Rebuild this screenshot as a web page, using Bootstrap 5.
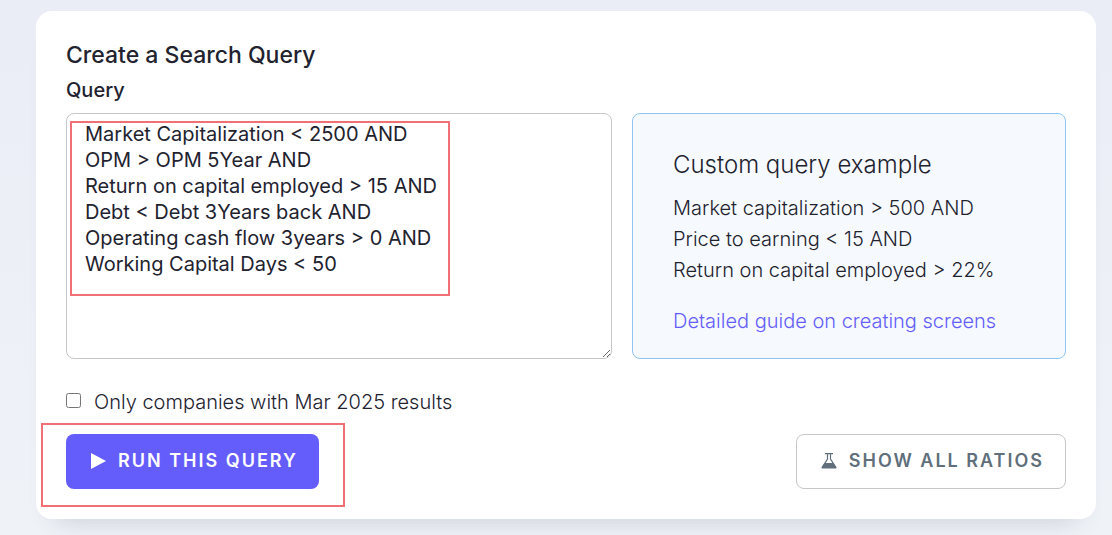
<!DOCTYPE html>
<html lang="en">
<head>
<meta charset="utf-8">
<meta name="viewport" content="width=device-width, initial-scale=1">
<title>Create a Search Query</title>
<link href="https://cdn.jsdelivr.net/npm/bootstrap@5.3.0/dist/css/bootstrap.min.css" rel="stylesheet">
<style>
  body {
    font-family: Inter, "Liberation Sans", sans-serif;
    font-size: 20px; line-height: 31px; font-weight: 300;
    color: #22222f;
    background: linear-gradient(#eaedf6, #eff2f7);
    min-height: 100vh;
    padding: 11px 16px 16px 36px;
  }
  .query-card { border: 0; border-radius: 16px; padding: 28px 30px 30px; box-shadow: 0 20px 24px -20px rgba(60, 80, 100, .24); }
  .query-title { font-size: 23px; line-height: 32px; font-weight: 500; }
  .query-label { font-size: 20px; line-height: 30px; font-weight: 500; }
  .query-grid { display: grid; grid-template-columns: 39fr 31fr; gap: 20px; }
  .query-text {
    font-size: 20px; line-height: 26px; font-weight: 400;
    height: 246px; padding: 7px 18px; border: 1px solid #c6c6cb; border-radius: 8px; resize: both;
  }
  .query-text, .query-text:focus { color: #22222f; background: #fff; }
  .example { background: #f6fafe; border: 1px solid #90c4f4; border-radius: 8px; padding: 34px 40px 20px; }
  .example-title { font-size: 24px; line-height: 34px; font-weight: 300; margin-bottom: 11px; }
  .example a { color: #655dfb; text-decoration: none; }
  .results-check { width: 15px; height: 15px; margin: 0 13px 5px 0; }
  .action { height: 55px; padding: 0 21px 2px 24px; border-radius: 8px; font-size: 18px; line-height: 24px; font-weight: 600; letter-spacing: 2px; gap: 12px; }
  .action-run, .action-run:hover { color: #fff; background: #655dfb; border: 0; }
  .action-ratios, .action-ratios:hover { color: #606f7b; background: #fff; border: 1px solid #c6c6cb; }
  .mark-box { position: absolute; border: 2px solid #f07076; pointer-events: none; }
  .mark-query { left: 4px; top: 8px; width: 380px; height: 175px; }
  .mark-run { inset: -11px -26px -18px -25px; }
</style>
</head>
<body>
<main class="card query-card">
  <h1 class="query-title mb-1">Create a Search Query</h1>
  <label for="query" class="query-label mb-2">Query</label>
  <div class="query-grid">
    <div class="position-relative">
      <textarea id="query" class="form-control query-text" spellcheck="false">Market Capitalization &lt; 2500 AND
OPM &gt; OPM 5Year AND
Return on capital employed &gt; 15 AND
Debt &lt; Debt 3Years back AND
Operating cash flow 3years &gt; 0 AND
Working Capital Days &lt; 50</textarea>
      <div class="mark-box mark-query"></div>
    </div>
    <section class="example">
      <h2 class="example-title">Custom query example</h2>
      <p class="mb-0">Market capitalization &gt; 500 AND<br>Price to earning &lt; 15 AND<br>Return on capital employed &gt; 22%</p>
      <p class="mb-0 mt-3 pt-1"><a href="#guide">Detailed guide on creating screens</a></p>
    </section>
  </div>
  <div class="d-flex align-items-center mt-4 pt-1 mb-3">
    <input type="checkbox" id="results" class="results-check">
    <label for="results">Only companies with Mar 2025 results</label>
  </div>
  <div class="d-flex flex-wrap justify-content-between gap-3">
    <div class="position-relative">
      <button type="button" class="btn action action-run d-flex align-items-center">
        <svg width="16" height="16" viewBox="0 0 16 16" fill="currentColor" aria-hidden="true"><path d="M1 0v16l15-8z"/></svg>
        RUN THIS QUERY
      </button>
      <div class="mark-box mark-run"></div>
    </div>
    <button type="button" class="btn action action-ratios d-flex align-items-center">
      <svg width="16" height="16" viewBox="0 0 16 16" aria-hidden="true"><path d="M4 .7h8M6.500 1v5L1.500 14h13l-5-8V1" fill="none" stroke="currentColor" stroke-width="1.200"/><path d="M3.500 10h9l3 4.500q0 1-1 1h-13q-1 0-1-1z" fill="currentColor"/></svg>
      SHOW ALL RATIOS
    </button>
  </div>
</main>
<script src="https://cdn.jsdelivr.net/npm/bootstrap@5.3.0/dist/js/bootstrap.bundle.min.js"></script>
</body>
</html>
